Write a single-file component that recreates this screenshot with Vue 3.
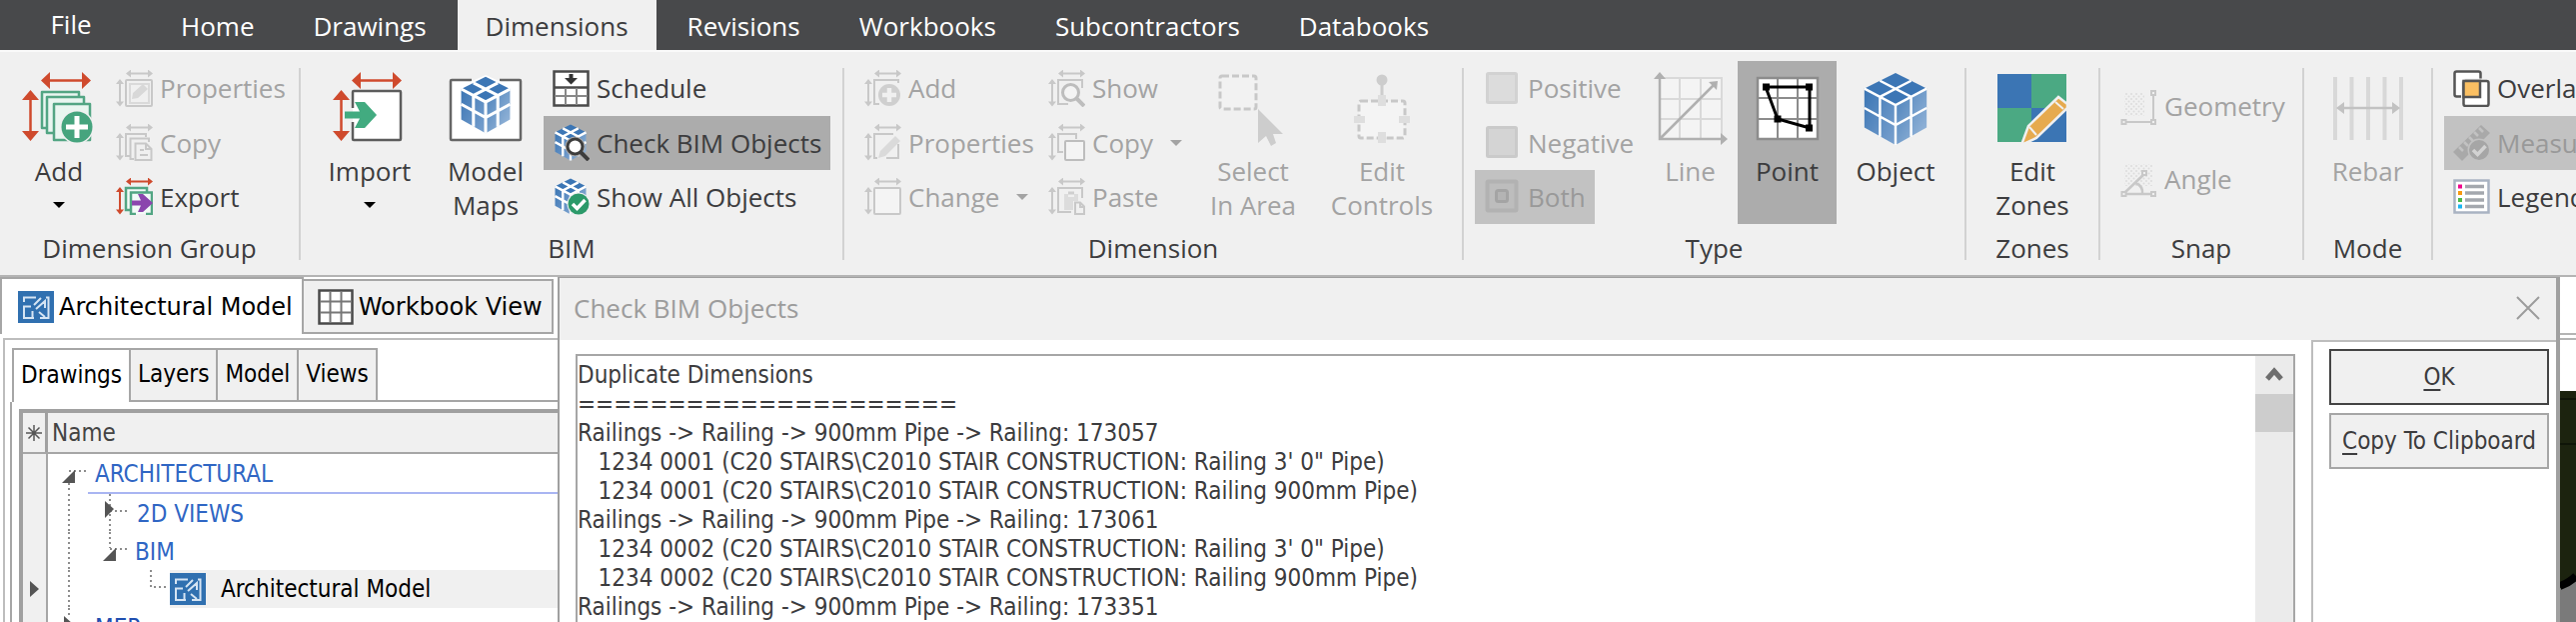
<script setup>
import { ref } from 'vue'

const menuTabs = ['Home', 'Drawings', 'Dimensions', 'Revisions', 'Workbooks', 'Subcontractors', 'Databooks']
const activeMenu = ref('Dimensions')

const groups = [
  {
    title: 'Dimension Group',
    width: 299,
    items: [
      { kind: 'big', icon: 'dim-add', label: ['Add'], width: 96, arrow: true },
      {
        kind: 'list',
        width: 181,
        rows: [
          { icon: 'group-props', label: 'Properties', disabled: true },
          { icon: 'group-copy', label: 'Copy', disabled: true },
          { icon: 'group-export', label: 'Export' },
        ],
      },
    ],
  },
  {
    title: 'BIM',
    width: 542,
    items: [
      { kind: 'big', icon: 'import', label: ['Import'], width: 116, arrow: true },
      { kind: 'big', icon: 'model-maps', label: ['Model', 'Maps'], width: 116 },
      {
        kind: 'list',
        width: 288,
        rows: [
          { icon: 'schedule', label: 'Schedule' },
          { icon: 'check-bim', label: 'Check BIM Objects', checked: true },
          { icon: 'show-all', label: 'Show All Objects' },
        ],
      },
    ],
  },
  {
    title: 'Dimension',
    width: 618,
    items: [
      {
        kind: 'list',
        width: 184,
        rows: [
          { icon: 'd-add', label: 'Add', disabled: true },
          { icon: 'd-props', label: 'Properties', disabled: true },
          { icon: 'd-change', label: 'Change', disabled: true, arrow: true },
        ],
      },
      {
        kind: 'list',
        width: 154,
        rows: [
          { icon: 'd-show', label: 'Show', disabled: true },
          { icon: 'd-copy', label: 'Copy', disabled: true, arrow: true },
          { icon: 'd-paste', label: 'Paste', disabled: true },
        ],
      },
      { kind: 'big', icon: 'select-area', label: ['Select', 'In Area'], width: 120, disabled: true },
      { kind: 'big', icon: 'edit-controls', label: ['Edit', 'Controls'], width: 138, disabled: true },
    ],
  },
  {
    title: 'Type',
    width: 501,
    items: [
      {
        kind: 'list',
        width: 168,
        rows: [
          { icon: 'positive', label: 'Positive', disabled: true },
          { icon: 'negative', label: 'Negative', disabled: true },
          { icon: 'both', label: 'Both', disabled: true, checked: true },
        ],
      },
      { kind: 'big', icon: 'line', label: ['Line'], width: 95, disabled: true },
      { kind: 'big', icon: 'point', label: ['Point'], width: 99, checked: true },
      { kind: 'big', icon: 'object', label: ['Object'], width: 118 },
    ],
  },
  {
    title: 'Zones',
    width: 132,
    items: [{ kind: 'big', icon: 'zones', label: ['Edit', 'Zones'], width: 110 }],
  },
  {
    title: 'Snap',
    width: 202,
    items: [
      {
        kind: 'list',
        width: 180,
        rows: [
          { icon: 'geometry', label: 'Geometry', disabled: true },
          { icon: 'angle', label: 'Angle', disabled: true },
        ],
      },
    ],
  },
  {
    title: 'Mode',
    width: 127,
    items: [{ kind: 'big', icon: 'rebar', label: ['Rebar'], width: 105, disabled: true }],
  },
  {
    title: '',
    width: 220,
    items: [
      {
        kind: 'list',
        width: 198,
        rows: [
          { icon: 'overlap', label: 'Overlap' },
          { icon: 'measure', label: 'Measure', disabled: true, checked: true },
          { icon: 'legend', label: 'Legend' },
        ],
      },
    ],
  },
]

const sideTabs = ['Drawings', 'Layers', 'Model', 'Views']
const activeSide = ref('Drawings')

const report = ref(`Duplicate Dimensions
=====================
Railings -> Railing -> 900mm Pipe -> Railing: 173057
   1234 0001 (C20 STAIRS\\C2010 STAIR CONSTRUCTION: Railing 3' 0" Pipe)
   1234 0001 (C20 STAIRS\\C2010 STAIR CONSTRUCTION: Railing 900mm Pipe)
Railings -> Railing -> 900mm Pipe -> Railing: 173061
   1234 0002 (C20 STAIRS\\C2010 STAIR CONSTRUCTION: Railing 3' 0" Pipe)
   1234 0002 (C20 STAIRS\\C2010 STAIR CONSTRUCTION: Railing 900mm Pipe)
Railings -> Railing -> 900mm Pipe -> Railing: 173351`)

function copyReport() {
  navigator.clipboard?.writeText(report.value)
}
</script>

<template>
  <div class="app">
    <!-- icon definitions -->
    <svg class="defs" aria-hidden="true">
      <defs>
        <linearGradient id="cubeLeft" x1="0" y1="0" x2="1" y2="1">
          <stop offset="0" stop-color="#3a75b4" />
          <stop offset="1" stop-color="#7ba2cf" />
        </linearGradient>
        <linearGradient id="cubeRight" x1="0" y1="0" x2="1" y2="1">
          <stop offset="0" stop-color="#4a80ba" />
          <stop offset="1" stop-color="#9dbbdc" />
        </linearGradient>
        <pattern id="dots" width="5" height="5" patternUnits="userSpaceOnUse">
          <circle cx="1" cy="1" r="1" fill="#dcdcdc" />
          <circle cx="3.5" cy="3.5" r="1" fill="#dcdcdc" />
        </pattern>
      </defs>

      <symbol id="arrows-s" viewBox="0 0 37 37">
        <path d="M13 3.500H34M4 12V33" stroke="currentColor" stroke-width="2" />
        <path d="M10 3.500l5-4v8zM37 3.500l-5-4v8zM4 9l-4 5h8zM4 36.500l-4-5h8z" fill="currentColor" />
      </symbol>
      <symbol id="arrows-l" viewBox="0 0 74 74">
        <path d="M25 8.500H64M8.500 26V62" stroke="currentColor" stroke-width="2.500" />
        <path d="M19 8.500l9-8.500v17zM69 8.500l-9-8.500v17zM8.500 18l-8.500 10h17zM8.500 69l-8.500-10h17z" fill="currentColor" />
      </symbol>
      <symbol id="cube" viewBox="-1 -1 66 76">
        <path d="M32 0L64 16 32 33 0 16z" fill="#3c76b5" stroke="none" />
        <path d="M0 16l32 17v41L0 56z" fill="url(#cubeLeft)" stroke="none" />
        <path d="M64 16L32 33v41l32-18z" fill="url(#cubeRight)" stroke="none" />
        <path
          d="M0 16l32 17 32-17M32 33v41M16 8l32 16.500v41M48 8L16 24.500v41M0 36l32 17.500L64 36"
          fill="none"
          stroke="#fff"
        />
      </symbol>
      <symbol id="plan" viewBox="0 0 36 32">
        <path d="M0 0h36v32H0z" fill="#3070b0" />
        <path
          d="M6 11V6.500H18M28 6.500h2.500V27H22M16 27H6V15.500h7M14.500 27v-7M16 14l7-7M18 18l9-8v7M21 21l6 5"
          fill="none"
          stroke="#d5e4f3"
          stroke-width="2"
        />
      </symbol>

      <symbol id="dim-add" viewBox="0 0 74 74">
        <use href="#arrows-l" width="74" height="74" color="#cf4a2d" />
        <g fill="#e9f6f0" stroke="#52a583" stroke-width="2.500" stroke-linejoin="round">
          <path d="M20 56V20H57V56z" />
          <path d="M25 61V25H62V61z" />
          <path d="M32 68V32H68V68z" />
        </g>
        <circle cx="55" cy="55" r="17" fill="#f0f0f0" />
        <circle cx="55" cy="55" r="15.500" fill="#46a47e" />
        <path d="M55 44V66M44 55H66" stroke="#fff" stroke-width="5" />
      </symbol>
      <symbol id="import" viewBox="0 0 74 74">
        <use href="#arrows-l" width="74" height="74" color="#cf4a2d" />
        <path d="M20 36V20a1 1 0 0 1 1-1H67a1 1 0 0 1 1 1V67a1 1 0 0 1-1 1H21a1 1 0 0 1-1-1V50" fill="#fff" stroke="#5c5c5c" stroke-width="2.500" />
        <path d="M12 39.500H27L22 30H32L44 43 32 56H22L27 46.500H12z" fill="#42ab80" />
      </symbol>
      <symbol id="model-maps" viewBox="0 0 74 74">
        <rect x="2" y="8" width="70" height="60" rx="1" fill="#fff" stroke="#666" stroke-width="2.500" />
        <path d="M23 4H51V12H23z" fill="#f0f0f0" />
        <path d="M37 3L66 16v28L37 62 8 44V16z" fill="#fff" />
        <use href="#cube" x="11" y="4" width="52" height="58" stroke-width="4" />
      </symbol>
      <symbol id="object" viewBox="0 0 74 74">
        <use href="#cube" x="4" y="0" width="66" height="74" stroke-width="2.500" />
      </symbol>

      <symbol id="group-props" viewBox="0 0 37 37">
        <use href="#arrows-s" width="37" height="37" />
        <rect x="10" y="10" width="26" height="26" rx="1" fill="none" stroke="currentColor" stroke-width="2" />
        <path d="M14 14H33V33H14z" fill="none" stroke="#dadada" stroke-width="2" />
        <path d="M16 29l1-6 10-9 5 5-10 9z" fill="#d8d8d8" />
      </symbol>
      <symbol id="group-copy" viewBox="0 0 37 37">
        <use href="#arrows-s" width="37" height="37" />
        <path d="M14 32H10V10H30V13M18 35H14.500V14.500H33V18" fill="none" stroke="currentColor" stroke-width="2" />
        <path d="M19.500 19.500H30L35.500 25V36H19.500zM30 19.500V25H36M24 26h4M24 31h8" fill="none" stroke="currentColor" stroke-width="2" />
      </symbol>
      <symbol id="group-export" viewBox="0 0 37 37">
        <use href="#arrows-s" width="37" height="37" color="#cf4a2d" />
        <path d="M14 32H10V10H31V14M20 36H15V14.500H36V36H30" fill="#f3faf7" stroke="#52a583" stroke-width="2.500" />
        <path d="M16 22.500H25L22 16H27L37 25 27 34H22L25 27.500H16z" fill="#8b46ad" />
      </symbol>

      <symbol id="schedule" viewBox="0 0 37 37">
        <path d="M1.500 1.500H35.500V35.500H1.500z" fill="#fff" stroke="#4a4a4a" stroke-width="2.500" />
        <path d="M1.500 17.500H35.500" stroke="#4a4a4a" stroke-width="2.500" />
        <path d="M2 26H35M13 18V35M24 18V35" stroke="#888" stroke-width="2" />
        <path d="M16.500 4h4v4H25l-6.500 6.500L12 8h4.500z" fill="#333" />
      </symbol>
      <symbol id="check-bim" viewBox="0 0 37 37">
        <use href="#cube" x="2" y="0" width="32" height="37" stroke-width="5" />
        <circle cx="22.500" cy="22.500" r="10" fill="#acacac" />
        <circle cx="22.500" cy="22.500" r="7.500" fill="#fff" stroke="#3d3d3d" stroke-width="3" />
        <path d="M28 28l8 8" stroke="#3d3d3d" stroke-width="4" />
      </symbol>
      <symbol id="show-all" viewBox="0 0 37 37">
        <use href="#cube" x="2" y="0" width="32" height="37" stroke-width="5" />
        <circle cx="26" cy="26" r="11.500" fill="#f0f0f0" />
        <circle cx="26" cy="26" r="10.500" fill="#2c9a6a" />
        <path d="M20 26l4.500 4.500 8-8.500" fill="none" stroke="#fff" stroke-width="3.500" />
      </symbol>

      <symbol id="d-add" viewBox="0 0 37 37">
        <use href="#arrows-s" width="37" height="37" />
        <path d="M15 34H10V10H34V13" fill="none" stroke="currentColor" stroke-width="2" />
        <circle cx="25" cy="25" r="11" fill="#cfcfcf" />
        <path d="M25 18V32M18 25H32" stroke="#f0f0f0" stroke-width="4.500" />
      </symbol>
      <symbol id="d-props" viewBox="0 0 37 37">
        <use href="#arrows-s" width="37" height="37" />
        <path d="M13 34H10V10H29M34 20V34H22" fill="none" stroke="currentColor" stroke-width="2" />
        <path d="M14 34l2-7 15-15 5 5-15 15z" fill="#dadada" />
      </symbol>
      <symbol id="d-change" viewBox="0 0 37 37">
        <use href="#arrows-s" width="37" height="37" />
        <rect x="10" y="10" width="26" height="26" rx="1" fill="#f4f4f4" stroke="currentColor" stroke-width="2" />
      </symbol>
      <symbol id="d-show" viewBox="0 0 37 37">
        <use href="#arrows-s" width="37" height="37" />
        <path d="M20 34H10V10H34V18" fill="none" stroke="currentColor" stroke-width="2" />
        <circle cx="22.500" cy="22.500" r="8" fill="#f4f4f4" stroke="#bdbdbd" stroke-width="3" />
        <path d="M28 28l8 8" stroke="#bdbdbd" stroke-width="4" />
      </symbol>
      <symbol id="d-copy" viewBox="0 0 37 37">
        <use href="#arrows-s" width="37" height="37" />
        <path d="M15 28H10V10H28V15" fill="none" stroke="currentColor" stroke-width="2" />
        <rect x="17" y="17" width="19" height="19" rx="1" fill="#f4f4f4" stroke="#bdbdbd" stroke-width="2" />
      </symbol>
      <symbol id="d-paste" viewBox="0 0 37 37">
        <use href="#arrows-s" width="37" height="37" />
        <path d="M23 34H10V10H34V20" fill="none" stroke="currentColor" stroke-width="2" />
        <path d="M16 16h4v3h6v-3h4v7h-5v9H16z" fill="#dcdcdc" />
        <path d="M20 15h6" stroke="#cfcfcf" stroke-width="3" />
        <path d="M27 24.500h5l4 4V36H27zM32 24.500V29h4" fill="#f0f0f0" stroke="currentColor" stroke-width="2" />
      </symbol>
      <symbol id="select-area" viewBox="0 0 74 74">
        <rect x="4" y="4" width="36" height="33" rx="2" fill="#f2f2f2" stroke="currentColor" stroke-width="3" stroke-dasharray="7 3" />
        <path d="M42 37L67 62H57L60 71 55 74 50 64 42 71z" fill="#cdcdcd" />
      </symbol>
      <symbol id="edit-controls" viewBox="0 0 74 74">
        <circle cx="37" cy="8" r="5.500" fill="#cdcdcd" />
        <path d="M37 12V24" stroke="#cdcdcd" stroke-width="3" />
        <rect x="14" y="29" width="46" height="37" rx="2" fill="#f4f4f4" stroke="currentColor" stroke-width="3" stroke-dasharray="7 3" />
        <path d="M33 23h8v11h-8zM33 60h8v11h-8zM9 44h11v7H9zM54 44h11v7H54z" fill="#dedede" />
      </symbol>

      <symbol id="positive" viewBox="0 0 37 37">
        <rect x="3.500" y="3.500" width="29" height="29" rx="1" fill="#dcdcdc" stroke="#d2d2d2" stroke-width="3" />
      </symbol>
      <symbol id="negative" viewBox="0 0 37 37">
        <rect x="3.500" y="3.500" width="29" height="29" rx="1" fill="#d4d4d4" stroke="#cacaca" stroke-width="3" />
      </symbol>
      <symbol id="both" viewBox="0 0 37 37">
        <rect x="3.500" y="3.500" width="29" height="29" rx="1" fill="#bdbdbd" stroke="#b2b2b2" stroke-width="4" />
        <rect x="12.500" y="12.500" width="11" height="11" rx="2" fill="#b4b4b4" stroke="#a4a4a4" stroke-width="3" />
      </symbol>
      <symbol id="line" viewBox="0 0 74 74">
        <path d="M6 6H68V67H6z" fill="#f4f4f4" />
        <path d="M6 6H68V67M26 6V67M47 6V67M6 27H68M6 47H68" fill="none" stroke="#d9d9d9" stroke-width="2" />
        <path d="M6 5V67H69M6 67L60 13" fill="none" stroke="#b0b0b0" stroke-width="2.500" />
        <path d="M6 0l6 7H0zM74 67l-7-6v12zM64 9l-9 1 8 8z" fill="#b0b0b0" />
      </symbol>
      <symbol id="point" viewBox="0 0 74 74">
        <path d="M7 6H67V67H7z" fill="#fff" stroke="#8c8c8c" stroke-width="2.500" />
        <path d="M27 6V67M47 6V67M7 26H67M7 47H67" stroke="#8c8c8c" stroke-width="2" />
        <path d="M15 15H59V56L27 47z" fill="none" stroke="#000" stroke-width="3" />
        <path d="M12 11.500h7v7h-7zM55 11.500h7v7h-7zM55 52.500h7v7h-7zM23.500 43.500h7v7h-7z" fill="#000" />
      </symbol>
      <symbol id="zones" viewBox="0 0 74 74">
        <path d="M2 2H71V70H2z" fill="#4ba983" />
        <path d="M2 2H36V36H2zM36 36H71V70H36z" fill="#3b75b4" />
        <path d="M26 73l7-19L63 25l9 7v4L41 66z" fill="#e6aa4e" stroke="#f0f0f0" stroke-width="2.500" />
        <path d="M60 30l8 7M34 55l7 8" stroke="#f0f0f0" stroke-width="2" />
      </symbol>
      <symbol id="geometry" viewBox="0 0 37 37">
        <path d="M4 5H24V28H4z" fill="url(#dots)" />
        <path d="M6 34H32M33 8V33" stroke="currentColor" stroke-width="2" />
        <path d="M1.500 32h4v4h-4zM31 32h4v4h-4zM31 3h4v4h-4z" fill="#f0f0f0" stroke="currentColor" stroke-width="2" />
      </symbol>
      <symbol id="angle" viewBox="0 0 37 37">
        <path d="M4 4H32V26H4z" fill="url(#dots)" />
        <path d="M5 34H32M4 33L23 15M15 23q8 3 7 11" fill="none" stroke="currentColor" stroke-width="2.500" />
        <path d="M1.500 32h4v4h-4zM31 32h4v4h-4zM22 11h4v4h-4z" fill="#f0f0f0" stroke="currentColor" stroke-width="2" />
      </symbol>
      <symbol id="rebar" viewBox="0 0 74 74">
        <path d="M4 5V68M20.500 5V68M37 5V68M53.500 5V68M70 5V68" stroke="#d8d8d8" stroke-width="4" />
        <path d="M8 36H66" stroke="#c2c2c2" stroke-width="2.500" />
        <path d="M5 36l8-6v12zM69 36l-8-6v12z" fill="#c2c2c2" />
      </symbol>
      <symbol id="overlap" viewBox="0 0 37 37">
        <rect x="1.500" y="1.500" width="26" height="25" rx="2" fill="#fff" stroke="#555" stroke-width="2.500" />
        <rect x="10.500" y="11" width="25" height="25" rx="2" fill="#fff" stroke="#f0f0f0" stroke-width="5" />
        <rect x="10.500" y="11" width="25" height="25" rx="2" fill="#fff" stroke="#555" stroke-width="2.500" />
        <path d="M10.500 11H27V27H10.500z" fill="#fbc063" stroke="#555" stroke-width="2.500" />
      </symbol>
      <symbol id="measure" viewBox="0 0 37 37">
        <path d="M0 28L28 1l9 8L9 37z" fill="#a9a9a9" />
        <path d="M6 23l4 4M11 18l4 4M16 13l4 4M21 8l4 4M26 4l4 4" stroke="#c2c2c2" stroke-width="2.500" />
        <circle cx="26" cy="26" r="11.500" fill="#c2c2c2" />
        <circle cx="26" cy="26" r="10" fill="#a6a6a6" />
        <path d="M20 26l4.500 4.500 8-8.500" fill="none" stroke="#d2d2d2" stroke-width="3.500" />
      </symbol>
      <symbol id="legend" viewBox="0 0 37 37">
        <path d="M1.500 2.500H35.500V34.500H1.500z" fill="#fff" stroke="#a9b3c2" stroke-width="2.500" />
        <path d="M12 8.500H31M12 15H31M12 22H31M12 28.500H31" stroke="#a4a8ae" stroke-width="3.500" />
        <path d="M5 6.500h4v4H5z" fill="#f0058c" />
        <path d="M5 13h4v4H5z" fill="#f79a10" />
        <path d="M5 20h4v4H5z" fill="#4cb848" />
        <path d="M5 26.500h4v4H5z" fill="#19b5f1" />
      </symbol>
    </svg>

    <nav class="menu">
      <button class="file-tab">File</button>
      <button
        v-for="tab in menuTabs"
        :key="tab"
        class="menu-tab"
        :class="{ active: tab === activeMenu }"
        @click="activeMenu = tab"
      >
        {{ tab }}
      </button>
    </nav>

    <header class="ribbon">
      <template v-for="(group, gi) in groups" :key="gi">
        <section class="group" :style="{ width: group.width + 'px' }">
          <div class="group-body">
            <template v-for="(item, ii) in group.items" :key="ii">
              <button
                v-if="item.kind === 'big'"
                class="big"
                :class="{ checked: item.checked }"
                :disabled="item.disabled"
                :style="{ width: item.width + 'px' }"
              >
                <svg class="big-icon"><use :href="'#' + item.icon" /></svg>
                <span v-for="text in item.label" :key="text">{{ text }}</span>
                <i v-if="item.arrow" class="arrow"></i>
              </button>
              <div v-else class="list" :style="{ width: item.width + 'px' }">
                <button
                  v-for="row in item.rows"
                  :key="row.label"
                  class="small"
                  :class="{ checked: row.checked }"
                  :disabled="row.disabled"
                >
                  <svg class="small-icon"><use :href="'#' + row.icon" /></svg>
                  <span>{{ row.label }}</span>
                  <i v-if="row.arrow" class="arrow"></i>
                </button>
              </div>
            </template>
          </div>
          <div class="group-title">{{ group.title }}</div>
        </section>
        <i v-if="gi < groups.length - 1" class="sep"></i>
      </template>
    </header>

    <main class="workspace">
      <aside class="side">
        <div class="doc-tabs">
          <button class="doc-tab active">
            <svg class="plan-icon"><use href="#plan" /></svg>
            Architectural Model
          </button>
          <button class="doc-tab">
            <svg class="grid-icon" viewBox="0 0 36 36">
              <path d="M1.500 1.500H34.500V34.500H1.500z" fill="#fff" stroke="#4a4a4a" stroke-width="2.500" />
              <path d="M12.500 2V34M23.500 2V34M2 12.500H34M2 23.500H34" stroke="#777" stroke-width="2" />
            </svg>
            Workbook View
          </button>
        </div>

        <div class="side-panel">
          <div class="side-tabs">
            <button
              v-for="tab in sideTabs"
              :key="tab"
              class="side-tab"
              :class="{ active: tab === activeSide }"
              @click="activeSide = tab"
            >
              {{ tab }}
            </button>
          </div>

          <div class="side-content">
            <div class="tree">
              <div class="tree-head">
                <span class="gutter-head">
                  <svg class="star" viewBox="0 0 16 16">
                    <path d="M8 0V16M0 8H16M2.500 2.500l11 11M13.500 2.500l-11 11" stroke="#555" stroke-width="1.500" />
                  </svg>
                </span>
                <span class="col-name">Name</span>
              </div>
              <div class="tree-body">
                <div class="gutter">
                  <svg class="marker" viewBox="0 0 10 16"><path d="M0 0l9 8-9 8z" fill="#555" /></svg>
                </div>
                <div class="rows">
                  <div class="row first">
                    <svg class="indent" width="40" height="39">
                      <path d="M21 29V39M21 17H40" class="guide" />
                      <path d="M27 16V29H14z" fill="#555" />
                    </svg>
                    <span class="node">ARCHITECTURAL</span>
                  </div>
                  <div class="row">
                    <svg class="indent" width="82" height="38">
                      <path d="M21 0V38M62 0V38M62 17H80" class="guide" />
                      <path d="M57 7l9 8-9 9z" fill="#555" />
                    </svg>
                    <span class="node">2D VIEWS</span>
                  </div>
                  <div class="row">
                    <svg class="indent" width="80" height="38">
                      <path d="M21 0V38M62 0V16M62 17H80" class="guide" />
                      <path d="M68 16V29H55z" fill="#555" />
                    </svg>
                    <span class="node">BIM</span>
                  </div>
                  <div class="row">
                    <svg class="indent" width="122" height="38">
                      <path d="M21 0V38M103 0V17H120" class="guide" />
                    </svg>
                    <span class="node leaf">
                      <svg class="plan-icon"><use href="#plan" /></svg>
                      Architectural Model
                    </span>
                  </div>
                  <div class="row">
                    <svg class="indent" width="40" height="38">
                      <path d="M21 0V10M21 17H40" class="guide" />
                      <path d="M16 8l9 8-9 9z" fill="#555" />
                    </svg>
                    <span class="node strong">MEP</span>
                  </div>
                </div>
              </div>
            </div>
          </div>
        </div>
      </aside>

      <section class="dialog" role="dialog" aria-label="Check BIM Objects">
        <div class="dialog-head">
          <span>Check BIM Objects</span>
          <button class="close" aria-label="Close">
            <svg width="24" height="24" viewBox="0 0 24 24">
              <path d="M1 1l22 22M23 1L1 23" stroke="#9c9c9c" stroke-width="2" />
            </svg>
          </button>
        </div>
        <div class="dialog-body">
          <div class="report">
            <textarea v-model="report" class="report-text" aria-label="Report" readonly spellcheck="false" wrap="off"></textarea>
            <div class="scrollbar">
              <svg class="scroll-up" viewBox="0 0 38 38">
                <path d="M12 23l7-8 7 8" fill="none" stroke="#6e6e6e" stroke-width="5" />
              </svg>
              <div class="thumb"></div>
            </div>
          </div>
          <div class="actions">
            <button class="action primary"><span><u>O</u>K</span></button>
            <button class="action" @click="copyReport"><span><u>C</u>opy To Clipboard</span></button>
          </div>
        </div>
      </section>

      <div class="viewer">
        <div class="viewer-tabs"></div>
        <div class="viewer-bar"></div>
        <svg class="model" viewBox="0 0 16 231" preserveAspectRatio="none">
          <path d="M0 0H16V231H0z" fill="#1c230f" />
          <path d="M0 8H16M0 53H16" stroke="#0f1508" stroke-width="2" />
          <path d="M0 197q9-2 16-10V231H0z" fill="#7a7a7a" />
          <path d="M0 195q9-3 16-10" fill="none" stroke="#000" stroke-width="8" />
        </svg>
      </div>
    </main>
  </div>
</template>

<style>
body {
  background: #fff;
  overflow: hidden;
}
</style>

<style scoped>
.app {
  display: flex;
  flex-direction: column;
  height: 100vh;
  overflow: hidden;
  font-family: "Open Sans", "Noto Sans", sans-serif;
  font-size: 26px;
  line-height: 34px;
  color: #3c3c3e;
}

.defs {
  position: absolute;
  width: 0;
  height: 0;
}

button {
  margin: 0;
  padding: 0;
  border: 0;
  background: none;
  font: inherit;
  color: inherit;
  white-space: nowrap;
}

/* menu bar */
.menu {
  display: flex;
  flex: none;
  gap: 3px;
  height: 50px;
  background: #48494b;
  color: #fff;
}

.file-tab {
  width: 150px;
  padding: 0 8px 2px 0;
}

.menu-tab {
  padding: 2px 28px 0;
}

.menu-tab.active {
  background: #f0f0f0;
  color: #3c3c3e;
}

/* ribbon */
.ribbon {
  display: flex;
  flex: none;
  height: 223px;
  border-top: 2px solid #fafafa;
  background: #f0f0f0;
  overflow: hidden;
}

.sep {
  flex: none;
  width: 2px;
  margin: 16px 0 15px;
  background: #d2d2d2;
}

.group {
  flex: none;
  box-sizing: border-box;
  padding: 9px 11px 0;
}

.group-body {
  display: flex;
  height: 163px;
}

.group-title {
  margin-top: 7px;
  text-align: center;
}

.big {
  display: flex;
  flex: none;
  flex-direction: column;
  align-items: center;
  padding-top: 11px;
}

.big-icon {
  width: 74px;
  height: 74px;
  margin-bottom: 8px;
  color: #c8c8c8;
}

.list {
  display: flex;
  flex: none;
  flex-direction: column;
  justify-content: space-evenly;
  align-items: flex-start;
}

.small {
  display: flex;
  align-items: center;
  gap: 7px;
  height: 54px;
  padding: 0 9px;
}

.small-icon {
  flex: none;
  width: 37px;
  height: 37px;
  color: #c8c8c8;
}

.big:disabled,
.small:disabled {
  color: #a3a3a3;
}

.checked {
  background: #acacac;
}

.checked:disabled {
  background: #c2c2c2;
  color: #999;
}

.arrow {
  border: 6px solid transparent;
  border-top-color: currentColor;
  border-bottom: 0;
}

.big .arrow {
  margin-top: 14px;
  border-top-color: #000;
}

.small .arrow {
  margin-left: 10px;
}

/* workspace */
.workspace {
  display: flex;
  flex: 1;
  min-height: 0;
  border-top: 2px solid #b4b4b4;
  font-family: "DejaVu Sans Condensed", "DejaVu Sans", sans-serif;
  font-size: 24px;
}

.side {
  display: flex;
  flex-direction: column;
  flex: none;
  width: 558px;
  color: #000;
}

.doc-tabs {
  display: flex;
  flex: none;
  align-items: flex-end;
  height: 57px;
  font-family: "DejaVu Sans", sans-serif;
}

.doc-tab {
  display: flex;
  align-items: center;
  gap: 5px;
  height: 55px;
  padding: 0 9px 0 14px;
  border: 2px solid #a6a6a6;
  border-left: 0;
  background: #f0f0f0;
}

.doc-tab.active {
  height: 57px;
  padding-left: 16px;
  border-left: 2px solid #a6a6a6;
  border-bottom: 0;
  background: #fff;
}

.plan-icon {
  flex: none;
  width: 36px;
  height: 32px;
}

.grid-icon {
  flex: none;
  width: 36px;
  height: 36px;
}

.side-panel {
  display: flex;
  flex-direction: column;
  flex: 1;
  min-height: 0;
  margin: 4px 0 0 3px;
  border: 2px solid #bdbdbd;
  border-width: 2px 0 0 2px;
}

.side-tabs {
  display: flex;
  flex: none;
  align-items: flex-end;
  height: 60px;
  margin-left: 7px;
  border-bottom: 2px solid #a6a6a6;
}

.side-tab {
  height: 52px;
  padding: 0 7px 2px;
  border: 2px solid #a6a6a6;
  border-width: 2px 2px 0 0;
  background: #f0f0f0;
}

.side-tab.active {
  height: 54px;
  margin-bottom: -2px;
  border-left-width: 2px;
  background: #fff;
}

.side-content {
  flex: 1;
  min-height: 0;
  margin-left: 5px;
  padding: 7px 0 0 7px;
  border-left: 2px solid #a6a6a6;
}

.tree {
  display: flex;
  flex-direction: column;
  height: 100%;
  border: 4px solid #a0a0a0;
  border-width: 4px 0 0 4px;
}

.tree-head {
  display: flex;
  flex: none;
  height: 39px;
  border-bottom: 2px solid #a6a6a6;
  background: #f0f0f0;
  color: #444;
}

.gutter-head {
  display: flex;
  align-items: center;
  justify-content: center;
  width: 22px;
  border-right: 3px solid #a0a0a0;
}

.star {
  width: 16px;
  height: 16px;
}

.col-name {
  padding-left: 4px;
  line-height: 40px;
}

.tree-body {
  display: flex;
  flex: 1;
  min-height: 0;
  overflow: hidden;
}

.gutter {
  flex: none;
  width: 23px;
  padding-top: 127px;
  border-right: 2px solid #a6a6a6;
  background: #f0f0f0;
}

.marker {
  display: block;
  width: 10px;
  height: 16px;
  margin-left: 7px;
}

.rows {
  flex: 1;
}

.row {
  display: flex;
  height: 38px;
}

.row.first {
  height: 40px;
}

.row.first .node {
  border-bottom: 2px solid #a9b5f2;
}

.indent {
  flex: none;
}

.guide {
  fill: none;
  stroke: #8c8c8c;
  stroke-width: 2;
  stroke-dasharray: 2 3;
}

.node {
  flex: 1;
  padding-left: 7px;
  line-height: 40px;
  color: #2f66c4;
}

.node.leaf {
  display: flex;
  align-items: center;
  gap: 15px;
  padding-left: 0;
  background: #f0f0f0;
  color: #000;
}

.node.strong {
  color: #1f4fb0;
}

/* dialog */
.dialog {
  display: flex;
  flex-direction: column;
  flex: 1;
  min-width: 0;
  border: 2px solid #a0a0a0;
  border-width: 1px 4px 0 2px;
  background: #fff;
}

.dialog-head {
  display: flex;
  flex: none;
  box-sizing: border-box;
  align-items: center;
  justify-content: space-between;
  height: 62px;
  padding: 0 16px 2px 14px;
  background: #f0f0f0;
  font-family: "Open Sans", "Noto Sans", sans-serif;
  font-size: 26px;
  color: #9c9c9c;
}

.close svg {
  display: block;
}

.dialog-body {
  display: flex;
  flex: 1;
  min-height: 0;
}

.report {
  display: flex;
  flex: 1;
  min-width: 0;
  margin: 14px 16px 0;
  border: 2px solid #a6a6a6;
  border-bottom: 0;
}

.report-text {
  flex: 1;
  min-width: 0;
  margin: 0;
  padding: 5px 0 0;
  border: 0;
  outline: 0;
  resize: none;
  overflow: hidden;
  background: none;
  font: inherit;
  line-height: 29px;
  color: #3c3c3e;
}

.scrollbar {
  width: 38px;
  background: #ebebeb;
}

.scroll-up {
  display: block;
  width: 38px;
  height: 38px;
}

.thumb {
  height: 38px;
  background: #cdcdcd;
}

.actions {
  display: flex;
  flex-direction: column;
  flex: none;
  gap: 8px;
  width: 220px;
  padding: 7px 7px 0 16px;
  border: 2px solid #bdbdbd;
  border-width: 2px 0 0 2px;
}

.action {
  height: 56px;
  border: 2px solid #a6a6a6;
  background: #f0f0f0;
}

.action.primary {
  border-color: #444;
}

.action u {
  text-underline-offset: 4px;
}

/* model viewer behind the dialog */
.viewer {
  display: flex;
  flex-direction: column;
  flex: none;
  width: 16px;
}

.viewer-tabs {
  height: 56px;
  border-bottom: 2px solid #b4b4b4;
}

.viewer-bar {
  height: 51px;
  margin-top: 3px;
  border-top: 2px solid #b4b4b4;
}

.model {
  display: block;
  flex: 1;
  width: 100%;
  min-height: 0;
}
</style>
